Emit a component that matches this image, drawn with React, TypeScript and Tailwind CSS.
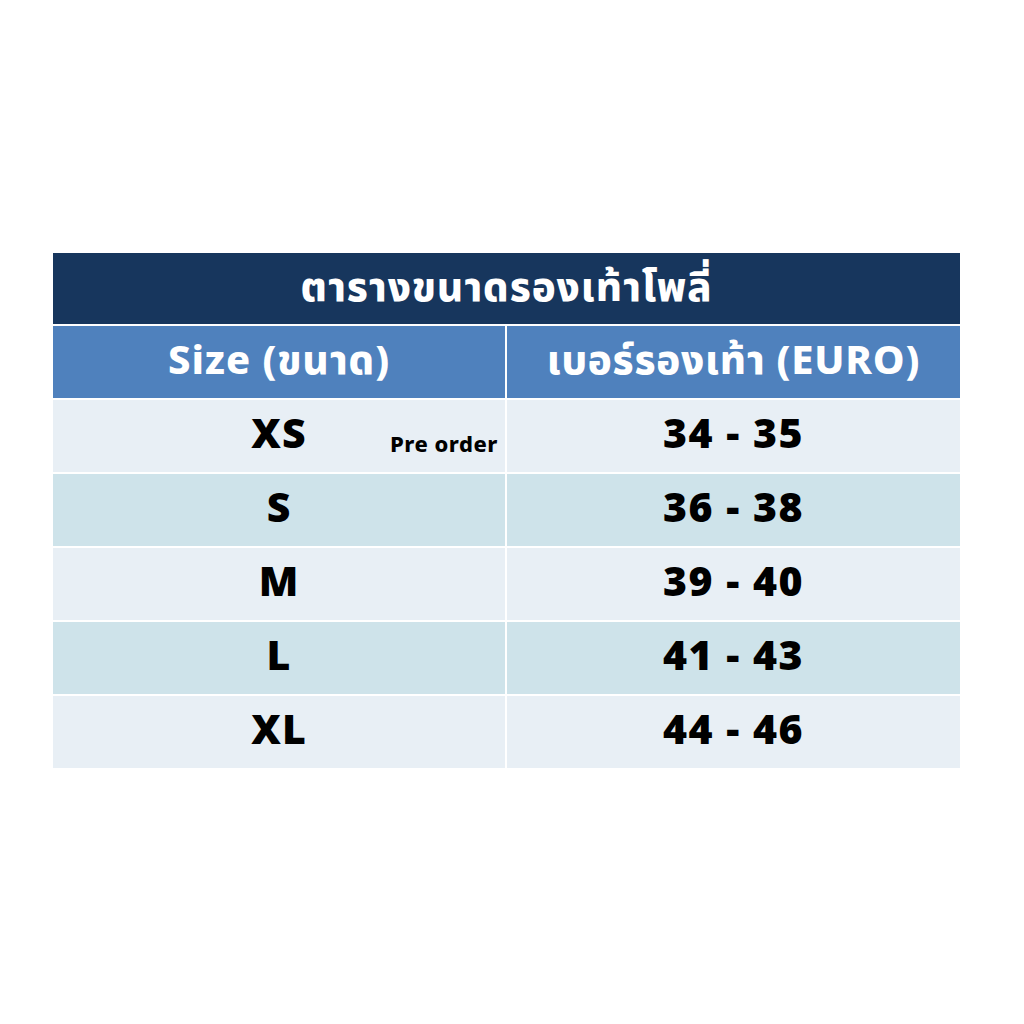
const rows = [
  { size: "XS", euro: "34 - 35", note: "Pre order" },
  { size: "S", euro: "36 - 38" },
  { size: "M", euro: "39 - 40" },
  { size: "L", euro: "41 - 43" },
  { size: "XL", euro: "44 - 46" },
];

export default function App() {
  return (
    <div
      className="min-h-[1024px] w-[1024px] bg-white pt-[253px] pl-[53px]"
      style={{ fontFamily: '"Noto Sans Thai", "Noto Sans", Roboto, sans-serif' }}
    >
      <div className="flex w-[907px] flex-col gap-[2px]">
        {/* title */}
        <div className="flex h-[71px] items-center justify-center bg-[#17365d]">
          <span className="text-[40px] font-extrabold tracking-[1px] text-white">ตารางขนาดรองเท้าโพลี่</span>
        </div>

        {/* header */}
        <div className="grid h-[72px] grid-cols-[452px_1fr] gap-[2px]">
          <div className="flex items-center justify-center bg-[#4f81bd]">
            <span className="text-[40px] font-extrabold tracking-[1px] text-white">Size (ขนาด)</span>
          </div>
          <div className="flex items-center justify-center bg-[#4f81bd]">
            <span className="text-[40px] font-extrabold tracking-[0.8px] text-white">เบอร์รองเท้า (EURO)</span>
          </div>
        </div>

        {rows.map((r, i) => (
          <div key={r.size} className="grid h-[72px] grid-cols-[452px_1fr] gap-[2px]">
            <div
              className={
                "relative flex items-center justify-center " +
                (i % 2 === 0 ? "bg-[#e8eff5]" : "bg-[#cee3ea]")
              }
            >
              <span className="text-[41px] font-black tracking-[1px] text-black">{r.size}</span>
              {r.note && (
                <span className="absolute right-[7px] top-[29px] text-[22px] font-extrabold tracking-[0.5px] text-black">
                  {r.note}
                </span>
              )}
            </div>
            <div
              className={
                "flex items-center justify-center " +
                (i % 2 === 0 ? "bg-[#e8eff5]" : "bg-[#cee3ea]")
              }
            >
              <span className="text-[41px] font-black tracking-[1.5px] text-black">{r.euro}</span>
            </div>
          </div>
        ))}
      </div>
    </div>
  );
}
